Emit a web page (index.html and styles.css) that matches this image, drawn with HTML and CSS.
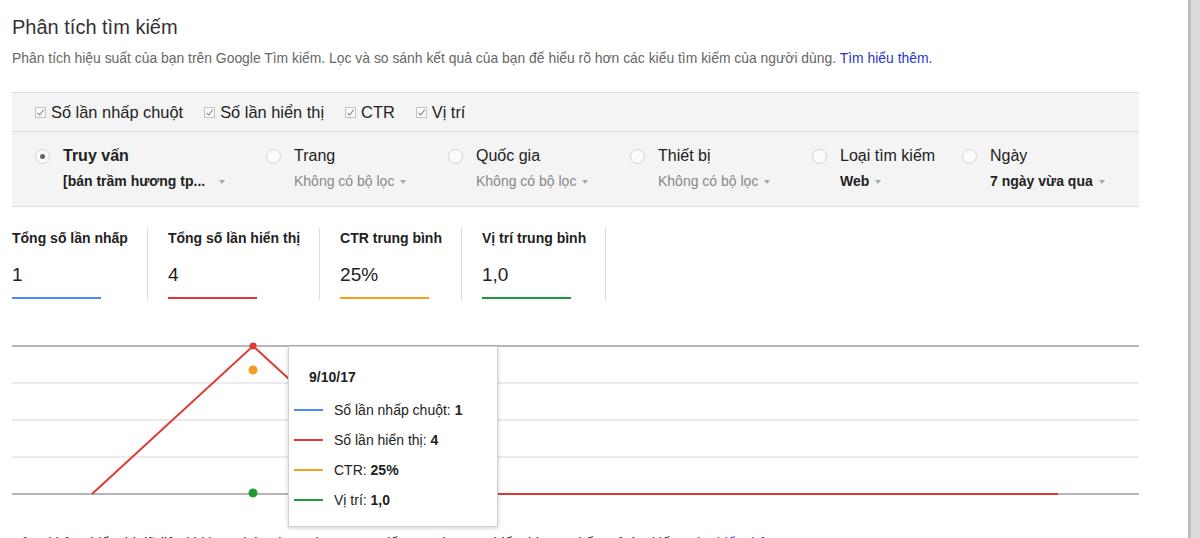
FILE: index.html
```html
<!DOCTYPE html>
<html>

<head>
    <meta charset="UTF-8">
    <title>Phân tích tìm kiếm</title>
    <link rel="stylesheet" href="styles.css">
</head>

<body>
    <div class="page">
        <h1 class="title">Phân tích tìm kiếm</h1>
        <p class="intro">Phân tích hiệu suất của bạn trên Google Tìm kiếm. Lọc và so sánh kết quả của bạn để hiểu rõ hơn các kiểu tìm kiếm của người dùng. <a href="#">Tìm hiểu thêm.</a></p>

        <!-- metric toggles + grouping filters -->
        <div class="filters">
            <div class="checks">
                <label class="check"><span class="box"><svg width="11" height="11" viewBox="0 0 11 11"><path d="M2.5 5.8 L4.6 8 L8.8 2.6" fill="none" stroke="#888" stroke-width="1.1"/></svg></span>Số lần nhấp chuột</label>
                <label class="check"><span class="box"><svg width="11" height="11" viewBox="0 0 11 11"><path d="M2.5 5.8 L4.6 8 L8.8 2.6" fill="none" stroke="#888" stroke-width="1.1"/></svg></span>Số lần hiển thị</label>
                <label class="check"><span class="box"><svg width="11" height="11" viewBox="0 0 11 11"><path d="M2.5 5.8 L4.6 8 L8.8 2.6" fill="none" stroke="#888" stroke-width="1.1"/></svg></span>CTR</label>
                <label class="check"><span class="box"><svg width="11" height="11" viewBox="0 0 11 11"><path d="M2.5 5.8 L4.6 8 L8.8 2.6" fill="none" stroke="#888" stroke-width="1.1"/></svg></span>Vị trí</label>
            </div>
            <div class="groups">
                <div class="group">
                    <span class="radio on"></span>
                    <div>
                        <div class="group-name bold">Truy vấn</div>
                        <div class="group-value bold">[bán trầm hương tp... <span class="caret caret-wide"></span></div>
                    </div>
                </div>
                <div class="group">
                    <span class="radio"></span>
                    <div>
                        <div class="group-name">Trang</div>
                        <div class="group-value">Không có bộ lọc <span class="caret"></span></div>
                    </div>
                </div>
                <div class="group">
                    <span class="radio"></span>
                    <div>
                        <div class="group-name">Quốc gia</div>
                        <div class="group-value">Không có bộ lọc <span class="caret"></span></div>
                    </div>
                </div>
                <div class="group">
                    <span class="radio"></span>
                    <div>
                        <div class="group-name">Thiết bị</div>
                        <div class="group-value">Không có bộ lọc <span class="caret"></span></div>
                    </div>
                </div>
                <div class="group">
                    <span class="radio"></span>
                    <div>
                        <div class="group-name">Loại tìm kiếm</div>
                        <div class="group-value bold">Web <span class="caret"></span></div>
                    </div>
                </div>
                <div class="group">
                    <span class="radio"></span>
                    <div>
                        <div class="group-name">Ngày</div>
                        <div class="group-value bold">7 ngày vừa qua <span class="caret"></span></div>
                    </div>
                </div>
            </div>
        </div>

        <!-- totals -->
        <div class="totals">
            <div class="total">
                <div class="total-label">Tổng số lần nhấp</div>
                <div class="total-value">1</div>
                <div class="total-bar blue"></div>
            </div>
            <div class="total">
                <div class="total-label">Tổng số lần hiển thị</div>
                <div class="total-value">4</div>
                <div class="total-bar red"></div>
            </div>
            <div class="total">
                <div class="total-label">CTR trung bình</div>
                <div class="total-value">25%</div>
                <div class="total-bar orange"></div>
            </div>
            <div class="total">
                <div class="total-label">Vị trí trung bình</div>
                <div class="total-value">1,0</div>
                <div class="total-bar green"></div>
            </div>
        </div>

        <!-- chart -->
        <div class="chart">
            <svg width="1127" height="160" viewBox="0 0 1127 160">
                <line x1="0" y1="6" x2="1127" y2="6" stroke="#9e9e9e" stroke-width="1.5"/>
                <line x1="0" y1="43" x2="1127" y2="43" stroke="#d6d6d6" stroke-width="1"/>
                <line x1="0" y1="80" x2="1127" y2="80" stroke="#d6d6d6" stroke-width="1"/>
                <line x1="0" y1="117" x2="1127" y2="117" stroke="#d6d6d6" stroke-width="1"/>
                <line x1="0" y1="154" x2="1127" y2="154" stroke="#9e9e9e" stroke-width="1.5"/>
                <polyline points="80,154 241,6 402,154 1046,154" fill="none" stroke="#dd3b34" stroke-width="2"/>
                <circle cx="241" cy="6" r="3.5" fill="#dd3b34"/>
                <circle cx="241" cy="30" r="4.5" fill="#f49b25"/>
                <circle cx="241" cy="153" r="4.5" fill="#1e9b32"/>
            </svg>
            <div class="tooltip">
                <div class="tip-date">9/10/17</div>
                <div class="tip-row"><span class="tip-line blue"></span><span>Số lần nhấp chuột: <b>1</b></span></div>
                <div class="tip-row"><span class="tip-line red"></span><span>Số lần hiển thị: <b>4</b></span></div>
                <div class="tip-row"><span class="tip-line orange"></span><span>CTR: <b>25%</b></span></div>
                <div class="tip-row"><span class="tip-line green"></span><span>Vị trí: <b>1,0</b></span></div>
            </div>
        </div>

        <p class="note">Bảng không hiển thị dữ liệu khi bạn nhóm theo Chọn Trang để xem các trang hiển thị trong kết quả tìm kiếm. <a href="#">Tìm hiểu thêm.</a></p>
    </div>

    <div class="scrollbar"></div>
</body>

</html>
```

FILE: styles.css
```css
* {
    margin: 0;
    padding: 0;
    box-sizing: border-box;
}

html,
body {
    height: 100%;
    overflow: hidden;
}

body {
    display: flex;
    background-color: #fff;
    color: #222;
    font-family: "Liberation Sans", Arial, sans-serif;
}

.page {
    flex: 1;
    padding-left: 12px;
}

.scrollbar {
    width: 12px;
    height: 100%;
    background-color: #dcdcdc;
    border-left: 3px solid #bdbdbd;
}

a {
    color: #2a36c8;
    text-decoration: none;
}

.title {
    font-size: 20px;
    font-weight: normal;
    color: #333;
    margin-top: 16px;
    line-height: 22px;
}

.intro {
    font-size: 13.9px;
    color: #666;
    margin-top: 12px;
    line-height: 16px;
}

/* grey filter panel */
.filters {
    width: 1127px;
    margin-top: 26px;
    background-color: #f4f4f4;
    border-top: 1px solid #dcdcdc;
    border-bottom: 1px solid #dcdcdc;
}

.checks {
    display: flex;
    gap: 21px;
    height: 39px;
    align-items: center;
    padding-left: 23px;
    border-bottom: 1px solid #dcdcdc;
    font-size: 16.4px;
}

.check {
    display: flex;
    align-items: center;
    gap: 5px;
}

.box {
    width: 11px;
    height: 11px;
    border: 1px solid #c4c4c4;
    background-color: #fafafa;
    display: flex;
}

.box svg {
    margin: -1px;
}

.groups {
    display: grid;
    grid-template-columns: 231px 182px 182px 182px 150px auto;
    padding: 14px 0 0 23px;
    height: 74px;
}

.group {
    display: flex;
    gap: 13px;
}

.radio {
    width: 15px;
    height: 15px;
    border-radius: 50%;
    border: 1px solid #d2d2d2;
    background-color: #fbfbfb;
    margin-top: 3px;
    position: relative;
}

.radio.on::after {
    content: "";
    position: absolute;
    left: 4px;
    top: 4px;
    width: 5px;
    height: 5px;
    border-radius: 50%;
    background-color: #666;
}

.group-name {
    font-size: 16px;
    line-height: 20px;
}

.group-value {
    font-size: 14px;
    line-height: 16px;
    margin-top: 7px;
    color: #888;
    white-space: nowrap;
}

.bold {
    font-weight: bold;
    color: #222;
}

.caret {
    display: inline-block;
    width: 0;
    height: 0;
    border-left: 3.5px solid transparent;
    border-right: 3.5px solid transparent;
    border-top: 4px solid #aaa;
    vertical-align: middle;
    margin-left: 2px;
}

.caret-wide {
    margin-left: 10px;
}

/* totals row */
.totals {
    display: flex;
    margin-top: 21px;
}

.total {
    padding: 2px 19px 0 20px;
    border-right: 1px solid #ddd;
    height: 72px;
}

.total:first-child {
    padding-left: 0;
}

.total-label {
    font-size: 14px;
    font-weight: bold;
    line-height: 16px;
}

.total-value {
    font-size: 19px;
    line-height: 22px;
    margin-top: 18px;
}

.total-bar {
    width: 89px;
    height: 2px;
    margin-top: 11px;
}

.blue {
    background-color: #4a89f3;
}

.red {
    background-color: #dd3b34;
}

.orange {
    background-color: #f5a020;
}

.green {
    background-color: #1e9b32;
}

/* chart + hover tooltip */
.chart {
    position: relative;
    margin-top: 40px;
    height: 160px;
}

.chart svg {
    display: block;
}

.tooltip {
    position: absolute;
    left: 276px;
    top: 6px;
    width: 210px;
    height: 181px;
    background-color: #fff;
    border: 1px solid #d0d0d0;
    box-shadow: 0 1px 4px rgba(0, 0, 0, 0.2);
    padding: 22px 0 0 20px;
    font-size: 14px;
    z-index: 2;
}

.tip-date {
    font-weight: bold;
    line-height: 16px;
    margin-bottom: 10px;
}

.tip-row {
    display: flex;
    align-items: center;
    height: 30px;
    margin-left: -15px;
}

.tip-line {
    width: 29px;
    height: 2px;
    margin-right: 11px;
}

.note {
    font-size: 14px;
    color: #222;
    margin-top: 35px;
}
```
